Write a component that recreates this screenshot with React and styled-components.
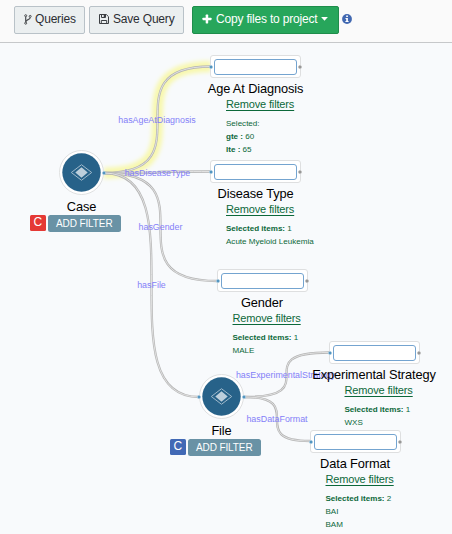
import React from "react";
import styled, { createGlobalStyle } from "styled-components";

const GlobalStyle = createGlobalStyle`
  html, body { margin: 0; padding: 0; overflow: hidden; background: #f8fafc; }
  body { font-family: "Liberation Sans", Arial, Helvetica, sans-serif; color: #000; }
`;

const Page = styled.div`
  display: flex;
  flex-direction: column;
  width: 452px;
  height: 534px;
  overflow: hidden;
`;

const Toolbar = styled.header`
  display: flex;
  align-items: flex-start;
  box-sizing: border-box;
  flex: none;
  height: 43px;
  padding: 6px 0 0 14px;
  background: #fafafa;
  border-bottom: 1px solid #c6c8ca;
`;

const ToolButton = styled.button`
  display: flex;
  align-items: center;
  box-sizing: border-box;
  flex: none;
  width: ${(p) => p.$width}px;
  height: 28px;
  margin: 0 ${(p) => p.$after}px 0 0;
  padding: 0 0 2px 9px;
  gap: ${(p) => p.$gap}px;
  border: 1px solid ${(p) => (p.$primary ? "#1f8d4b" : "#b9c2c8")};
  border-radius: 2px;
  background: ${(p) => (p.$primary ? "#27a65b" : "#ebeff0")};
  color: ${(p) => (p.$primary ? "#fff" : "#2b2e33")};
  font: 12px "Liberation Sans", Arial, sans-serif;
  letter-spacing: -0.19px;
  white-space: nowrap;
  svg { flex: none; display: block; }
`;

const InfoIcon = styled.svg`
  flex: none;
  display: block;
  margin-top: 7.5px;
`;

const Canvas = styled.main`
  position: relative;
  flex: 1;
`;

const Edges = styled.svg`
  position: absolute;
  left: 0;
  top: 0;
  pointer-events: none;
`;

const EdgeLabel = styled.span`
  position: absolute;
  left: ${(p) => p.$x}px;
  top: ${(p) => p.$y}px;
  transform: translate(-50%, -50%);
  font-size: 8.9px;
  line-height: 10px;
  color: #8480f8;
  white-space: nowrap;
`;

const FilterNode = styled.section`
  position: absolute;
  left: ${(p) => p.$x}px;
  top: ${(p) => p.$y}px;
  display: flex;
  flex-direction: column;
  width: 91px;
`;

const FilterFrame = styled.div`
  position: relative;
  box-sizing: border-box;
  height: 23px;
  padding: 3px 3px 2px;
  border: 1px solid #dedfe0;
  border-radius: 3px;
  background: #fff;
`;

const FilterField = styled.div`
  box-sizing: border-box;
  height: 16px;
  border: 1px solid #74a4d0;
  border-radius: 3px;
`;

const Port = styled.i`
  position: absolute;
  box-sizing: border-box;
  top: ${(p) => p.$top}px;
  ${(p) => p.$side}: -2px;
  width: 4px;
  height: 4px;
  border: 1px solid ${(p) => (p.$active ? "#a9cbe0" : "#c4c4c4")};
  border-radius: 50%;
  background: ${(p) => (p.$active ? "#2f7fb3" : "#858585")};
`;

const NodeTitle = styled.h2`
  align-self: center;
  margin: ${(p) => p.$gap}px 0 0;
  font-size: 12.8px;
  font-weight: 400;
  letter-spacing: -0.12px;
  line-height: 16px;
  white-space: nowrap;
`;

const FilterDetails = styled.div`
  display: flex;
  flex-direction: column;
  align-items: flex-start;
  padding-left: 16px;
  color: #0c683a;
  white-space: nowrap;
`;

const RemoveLink = styled.a`
  margin-bottom: 6px;
  font-size: 11px;
  letter-spacing: -0.15px;
  line-height: 14px;
  text-decoration: underline;
  text-decoration-thickness: 1px;
  text-underline-offset: 1.5px;
`;

const DetailLine = styled.span`
  font-size: 8.05px;
  line-height: 13px;
`;

const EntityNode = styled.section`
  position: absolute;
  left: ${(p) => p.$x}px;
  top: ${(p) => p.$y}px;
  display: flex;
  flex-direction: column;
  align-items: center;
  width: 92px;
`;

const EntityDisc = styled.div`
  position: relative;
  display: flex;
  width: 45px;
  height: 45px;
`;

const Actions = styled.div`
  display: flex;
  gap: 2px;
  margin: 0 0 0 -12.5px;
`;

const Badge = styled.span`
  width: 16px;
  height: 16px;
  border-radius: 1.5px;
  background: ${(p) => p.$color};
  color: #fff;
  font-size: 12px;
  line-height: 15px;
  text-align: center;
`;

const AddFilter = styled.span`
  width: 73px;
  height: 17px;
  border-radius: 2.5px;
  background: #6992a5;
  color: #fff;
  font-size: 10px;
  letter-spacing: -0.1px;
  line-height: 17px;
  text-align: center;
`;

const curve = (x0, y0, x1, y1) => `M${x0} ${y0}C${x1} ${y0} ${x0} ${y1} ${x1} ${y1}`;

const edges = [
  { d: curve(104, 130, 211, 23.5), glow: true },
  { d: curve(104, 130, 211, 128.5) },
  { d: curve(104, 130, 217, 238) },
  { d: curve(104, 130, 199, 354) },
  { d: curve(244, 354, 329, 309.5) },
  { d: curve(244, 354, 310, 398) },
];

const labels = [
  { text: "hasAgeAtDiagnosis", x: 157, y: 77 },
  { text: "hasDiseaseType", x: 157.5, y: 130 },
  { text: "hasGender", x: 160.5, y: 184 },
  { text: "hasFile", x: 151.5, y: 242 },
  { text: "hasExperimentalStrategy", x: 285.5, y: 332 },
  { text: "hasDataFormat", x: 277, y: 376 },
];

const entities = [
  { name: "Case", x: 35.5, y: 107, badge: "#e53935", ports: ["right"] },
  { name: "File", x: 175.5, y: 331, badge: "#4169b5", ports: ["left", "right"] },
];

const filters = [
  { name: "Age At Diagnosis", x: 210, y: 12, lines: [["", "Selected:"], ["gte :", " 60"], ["lte :", " 65"]] },
  { name: "Disease Type", x: 210, y: 117, lines: [["Selected items:", " 1"], ["", "Acute Myeloid Leukemia"]] },
  { name: "Gender", x: 216.5, y: 226, lines: [["Selected items:", " 1"], ["", "MALE"]] },
  { name: "Experimental Strategy", x: 328.5, y: 298, lines: [["Selected items:", " 1"], ["", "WXS"]] },
  { name: "Data Format", x: 309.5, y: 387, lines: [["Selected items:", " 2"], ["", "BAI"], ["", "BAM"]] },
];

const ForkIcon = () => (
  <svg width="8" height="11" viewBox="0 0 8 11" fill="none" stroke="#4a4d50" strokeWidth="1">
    <circle cx="1.7" cy="1.7" r="1" />
    <circle cx="6.2" cy="2.4" r="1" />
    <circle cx="1.7" cy="9.2" r="1" />
    <path d="M1.7 2.7v5.5M6.2 3.4c0 2.7-4.2 1.8-4.2 4.3" strokeWidth="1.2" />
  </svg>
);

const SaveIcon = () => (
  <svg width="10" height="10" viewBox="0 0 10 10" fill="none" stroke="#3c3f43" strokeWidth="1">
    <path d="M.5.5h6.8l2.2 2.2v6.8h-9z" strokeLinejoin="round" />
    <path d="M2.5.5v3h4v-3M2.3 9.5v-3h5.4v3" />
    <path d="M5.4 1v2" strokeWidth="1.3" />
  </svg>
);

const PlusIcon = () => (
  <svg width="10" height="10" viewBox="0 0 10 10" fill="#fff">
    <rect x="3.7" y=".6" width="2.5" height="8.8" rx=".6" />
    <rect x=".5" y="3.7" width="9" height="2.5" rx=".6" />
  </svg>
);

const CaretIcon = () => (
  <svg width="7" height="4" viewBox="0 0 7 4" fill="#fff">
    <path d="M.1.1h6.8L3.5 3.8z" />
  </svg>
);

function Entity({ name, x, y, badge, ports }) {
  return (
    <EntityNode $x={x} $y={y}>
      <EntityDisc>
        <svg width="45" height="45" viewBox="0 0 45 45">
          <circle cx="22.5" cy="22.5" r="22" fill="#fff" stroke="#dfe0e1" />
          <circle cx="22.5" cy="22.5" r="19.2" fill="#276289" />
          <path d="M12.3 22.5l10.2-7.8 10.2 7.8-10.2 7.8z" fill="none" stroke="#9fb9cb" strokeWidth="1" />
          <path d="M16.3 22.5l6.2-5.2 6.2 5.2-6.2 5.2z" fill="#bdcfdc" />
        </svg>
        {ports.map((side) => (
          <Port key={side} $side={side} $top={20.7} $active />
        ))}
      </EntityDisc>
      <NodeTitle $gap={4}>{name}</NodeTitle>
      <Actions>
        <Badge $color={badge}>C</Badge>
        <AddFilter>ADD FILTER</AddFilter>
      </Actions>
    </EntityNode>
  );
}

function Filter({ name, x, y, lines }) {
  return (
    <FilterNode $x={x} $y={y}>
      <FilterFrame>
        <FilterField />
        <Port $side="left" $top={8.5} $active />
        <Port $side="right" $top={8.5} />
      </FilterFrame>
      <NodeTitle $gap={2.5}>{name}</NodeTitle>
      <FilterDetails>
        <RemoveLink>Remove filters</RemoveLink>
        {lines.map(([strong, rest]) => (
          <DetailLine key={strong + rest}>
            {strong && <b>{strong}</b>}
            {rest}
          </DetailLine>
        ))}
      </FilterDetails>
    </FilterNode>
  );
}

export default function App() {
  return (
    <Page>
      <GlobalStyle />
      <Toolbar>
        <ToolButton $width={71} $after={4} $gap={3}>
          <ForkIcon />
          Queries
        </ToolButton>
        <ToolButton $width={95} $after={8} $gap={4}>
          <SaveIcon />
          Save Query
        </ToolButton>
        <ToolButton $primary $width={147} $after={3} $gap={4}>
          <PlusIcon />
          Copy files to project
          <CaretIcon />
        </ToolButton>
        <InfoIcon width="10" height="10" viewBox="0 0 10 10">
          <circle cx="5" cy="5" r="4.9" fill="#4168b1" />
          <path d="M4.2 1.5h1.7V3H4.2zM3.5 3.9h2.4v3h.7v1.2H3.4V6.9h.8V5.1h-.7z" fill="#fff" />
        </InfoIcon>
      </Toolbar>
      <Canvas>
        <Edges width="452" height="491" viewBox="0 0 452 491" fill="none">
          <defs>
            <filter id="glow" x="-20%" y="-20%" width="140%" height="140%">
              <feGaussianBlur stdDeviation="2" />
            </filter>
          </defs>
          {edges.filter((e) => e.glow).map((e) => (
            <path key={e.d} d={e.d} stroke="#f8f8ae" strokeWidth="11" filter="url(#glow)" />
          ))}
          {edges.map((e) => (
            <g key={e.d}>
              <path d={e.d} stroke="#b4b4b4" strokeWidth="2.3" />
              <path d={e.d} stroke="#ececec" strokeWidth="0.8" />
            </g>
          ))}
        </Edges>
        {labels.map((l) => (
          <EdgeLabel key={l.text} $x={l.x} $y={l.y}>{l.text}</EdgeLabel>
        ))}
        {entities.map((e) => (
          <Entity key={e.name} {...e} />
        ))}
        {filters.map((f) => (
          <Filter key={f.name} {...f} />
        ))}
      </Canvas>
    </Page>
  );
}
